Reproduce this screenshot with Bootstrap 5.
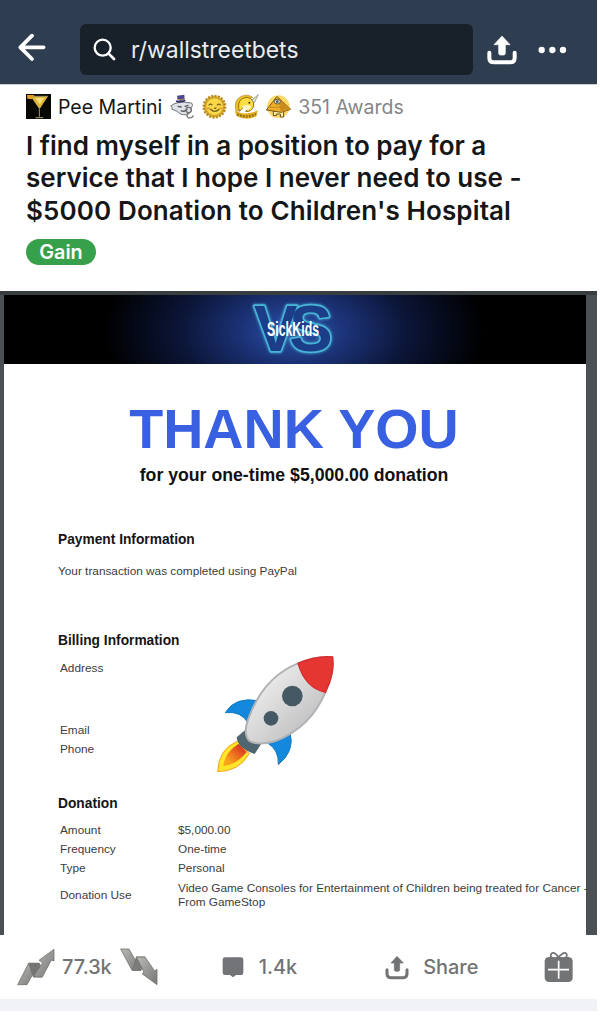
<!DOCTYPE html>
<html lang="en">
<head>
<meta charset="utf-8">
<meta name="viewport" content="width=device-width, initial-scale=1">
<title>r/wallstreetbets</title>
<link href="https://cdn.jsdelivr.net/npm/bootstrap@5.3.0/dist/css/bootstrap.min.css" rel="stylesheet">
<style>
body{background:#fff;font-family:Inter,"Open Sans",sans-serif;color:#151617;overflow:hidden}
svg{display:block;flex:none}
.app{width:597px}
.topbar{height:85px;background:#2e3e50;border-bottom:1px solid #c9ced4;padding:24px 30px 9px 18px}
.searchbox{width:393px;height:51px;background:#18202a;border-radius:6px;margin-left:34px;padding-left:13px;color:#e9ecef;font-size:22.9px}
.post{height:206px;padding:8px 25px 0 26px}
.meta{height:27px;font-size:19.5px}
.meta span{padding-top:2px}
.meta-awards{color:#858687}
.title{font-size:26px;font-weight:600;line-height:32.4px;margin:10px -20px 0 0;white-space:nowrap}
.t3{letter-spacing:.12px}
.flair{background:#37a04a;width:70px;height:26px;font-size:19.8px;font-weight:600;line-height:27px;margin-top:12px}
.doc{height:644px;background:#4b5054;border-top:4px solid #383d40;padding:0 11px 0 4px;font-family:"Liberation Sans",Arial,sans-serif}
.banner{height:69px;background:radial-gradient(ellipse 190px 110px at 290px 36px,#2c53ae 0,#1b3276 28%,#0b1537 60%,#000 100%)}
.sheet{height:571px;padding:0 0 0 54px;color:#3c3c3c;font-size:11.8px;line-height:19px;white-space:nowrap}
.thanks{font-size:55.6px;line-height:60px;color:#3860e0;padding-top:35px;margin-left:-56px}
.sub{font-size:17.7px;line-height:20px;color:#111;margin-left:-56px;margin-top:6px}
.sec{font-size:13.75px;line-height:20px;color:#151515;font-weight:700}
.lbl{width:118px;padding-left:2px;flex:none}
.actions{height:64px;color:#727375;font-size:19.9px;font-weight:500;padding-left:17px;padding-right:24px}
.actions span{padding-top:1px}
.strip{height:12px;background:#f0f2f6}
</style>
</head>
<body>
<div class="app">
<header class="topbar d-flex align-items-center">
  <svg width="28" height="29" viewBox="54 100 84 87" class="mb-1"><path d="M131 143H62M96 108L61 143L96 178" fill="none" stroke="#fff" stroke-width="11" stroke-linecap="round" stroke-linejoin="round"/></svg>
  <div class="searchbox d-flex align-items-center">
    <svg width="23" height="23" viewBox="280 115 69 69"><circle cx="309" cy="144" r="24" fill="none" stroke="#fff" stroke-width="7"/><path d="M327 162L343 178" stroke="#fff" stroke-width="8" stroke-linecap="round"/></svg>
    <span style="margin-left:15px;padding-top:2px">r/wallstreetbets</span>
  </div>
  <svg width="30" height="30" viewBox="559 105 90 90" style="margin-left:14px"><path d="M566 158V173Q566 187 580 187H628Q642 187 642 173V158" fill="none" stroke="#fff" stroke-width="12" stroke-linecap="round"/><path d="M604 108L628 134H614V160Q614 165 609 165H599Q594 165 594 160V134H580Z" fill="#fff" stroke="#fff" stroke-width="2" stroke-linejoin="round"/></svg>
  <svg width="29" height="8" viewBox="714 139 87 24" style="margin-left:21px"><g fill="#fff"><circle cx="725" cy="151" r="9.5"/><circle cx="757" cy="151" r="9.5"/><circle cx="789" cy="151" r="9.5"/></g></svg>
</header>

<section class="post">
  <div class="meta d-flex align-items-center">
    <svg width="25" height="25" viewBox="0 0 75 75"><path fill="#080704" d="M0 0H75V75H0Z"/><path d="M15 8H65L43 42H38Z" fill="#e0b63a"/><path d="M14 7H66M40 42V68M29 71H52" stroke="#c9bc86" stroke-width="2.5" fill="none"/><path d="M3 3H25L18 16L4 14Z" fill="#e29b25"/><path d="M28 12H54L42 31Z" fill="#f7df77"/></svg>
    <span style="margin-left:7px">Pee Martini</span>
    <div class="d-flex" style="gap:7px;margin-left:8px">
      <svg width="25" height="25" viewBox="0 0 75 75"><path d="M2 36Q12 28 22 27Q33 20 46 25L65 27Q71 34 64 41Q66 58 49 62Q30 64 22 52L5 45Q12 42 2 36Z" fill="#dfe3e7" stroke="#71777b" stroke-width="3"/><path d="M21 5L43 2L44 19Q33 24 23 19Z" fill="#4c4898"/><path d="M18 21Q32 28 46 19" stroke="#282758" stroke-width="5" fill="none"/><path d="M23 16Q34 20 44 14" stroke="#bd8e43" stroke-width="3" fill="none"/><path d="M23 37L35 39M44 38L55 34M32 50Q45 55 52 45" stroke="#54595c" stroke-width="4" fill="none"/><circle cx="56" cy="48" r="8" fill="none" stroke="#777" stroke-width="4"/><path d="M57 56Q46 63 54 71Q67 74 70 64" stroke="#777" stroke-width="4" fill="none"/></svg>
      <svg width="25" height="25" viewBox="0 0 75 75"><circle cx="37.5" cy="38" r="32" fill="#dcad2a" stroke="#ba8c24" stroke-width="8" stroke-dasharray="6 4"/><circle cx="37.5" cy="38" r="26" fill="#fbd848" stroke="#c69d30" stroke-width="2"/><path d="M20 34Q26 27 31 34M45 34Q51 27 56 34M25 45Q38 59 52 45M36 42Q40 45 43 40" stroke="#766020" stroke-width="3.5" fill="none"/><path d="M15 43H24M52 43H61" stroke="#e99c39" stroke-width="5"/></svg>
      <svg width="25" height="25" viewBox="0 0 75 75"><path d="M6 50Q-2 20 20 8Q38 -2 56 10Q46 14 24 22Q14 34 18 52Z" fill="#f0bf24" stroke="#a98220" stroke-width="2"/><path d="M14 44Q10 12 39 10Q61 14 59 36Q53 55 35 52Q47 44 39 36Q29 35 18 50Z" fill="#ffdd40" stroke="#916f19" stroke-width="3"/><path d="M53 18L73 2L61 26Z" fill="#dadbd4" stroke="#888269" stroke-width="2"/><path d="M24 37Q39 29 51 37Q51 49 31 49" fill="#fff5c5"/><circle cx="46" cy="26" r="3" fill="#403514"/><path d="M2 50Q38 67 72 49L67 67Q37 81 8 67Z" fill="#e0ae1f"/><path d="M10 61Q38 74 66 60" stroke="#8b6a19" stroke-width="7" stroke-dasharray="5 4" fill="none"/></svg>
      <svg width="25" height="25" viewBox="0 0 75 75"><circle cx="37" cy="38" r="34" fill="#ffd967"/><path d="M22 51V65H31V60H43V69H53V51Z" fill="#fff0a3" stroke="#68501c" stroke-width="3"/><path d="M33 7L1 48L45 55L74 46Z" fill="#edae28" stroke="#74571c" stroke-width="3" stroke-linejoin="round"/><path d="M33 7L45 55L74 46Z" fill="#cb8f20"/><path d="M12 40L56 40" stroke="#b67b1b" stroke-width="2"/><ellipse cx="34" cy="23" rx="9" ry="7" fill="#f3f2df" stroke="#60502e" stroke-width="3"/><circle cx="34" cy="23" r="4" fill="#365766"/></svg>
    </div>
    <span class="meta-awards" style="margin-left:7px">351 Awards</span>
  </div>
  <h1 class="title">I find myself in a position to pay for a<br>service that I hope I never need to use -<br><span class="t3">$5000 Donation to Children's Hospital</span></h1>
  <div class="flair rounded-pill text-white text-center">Gain</div>
</section>

<article class="doc">
  <div class="banner d-flex">
    <svg width="120" height="69" viewBox="232 295 120 69" style="margin-left:228px">
      <defs><filter id="glow" x="-20%" y="-20%" width="140%" height="140%"><feGaussianBlur stdDeviation="1.6" result="b"/><feMerge><feMergeNode in="b"/><feMergeNode in="SourceGraphic"/></feMerge></filter></defs>
      <text x="254" y="351" font-family="Liberation Sans,Arial,sans-serif" font-weight="700" font-size="65" letter-spacing="-8" fill="#1c3c88" stroke="#46b4d8" stroke-width="3.4" stroke-linejoin="round" paint-order="stroke" filter="url(#glow)">VS</text>
      <text x="267" y="335.5" textLength="52" lengthAdjust="spacingAndGlyphs" font-family="Liberation Sans Narrow,Liberation Sans,sans-serif" font-weight="700" font-size="19.5" fill="#fff">SickKids</text>
    </svg>
  </div>
  <div class="sheet bg-white">
    <div class="thanks text-center fw-bold">THANK YOU</div>
    <div class="sub text-center fw-bold">for your one-time $5,000.00 donation</div>
    <div class="sec" style="margin-top:45px">Payment Information</div>
    <div style="margin-top:12px">Your transaction was completed using PayPal</div>
    <div class="sec" style="margin-top:50px">Billing Information</div>
    <div class="d-flex" style="height:143px">
      <div class="lbl" style="padding-top:8px"><div>Address</div><div style="margin-top:43px">Email</div><div>Phone</div></div>
      <svg width="160" height="150" viewBox="0 0 480 450" style="margin:-10px 0 0 24px" role="img" aria-label="Rocket">
        <defs><linearGradient id="hull" x1="0" y1="0" x2="1" y2="1"><stop offset=".2" stop-color="#eee"/><stop offset=".8" stop-color="#bfbfc1"/></linearGradient><linearGradient id="fire" x1="1" y1="0" x2="0" y2="1"><stop offset=".2" stop-color="#dc3b24"/><stop offset=".8" stop-color="#f9a51b"/></linearGradient></defs>
        <path d="M76 215Q105 166 176 179L145 247Q124 209 76 215Z" fill="#1388dc" stroke="#167ac0" stroke-width="3"/>
        <path d="M204 307L271 277Q284 332 235 371Q237 327 204 307Z" fill="#1388dc" stroke="#167ac0" stroke-width="3"/>
        <path d="M112 301Q55 325 53 392Q117 392 148 338Z" fill="#ffe529" stroke="#efa51d" stroke-width="3"/>
        <path d="M116 308Q73 335 70 375Q109 372 140 333Z" fill="url(#fire)"/>
        <path d="M139 264L110 289Q113 322 164 339L184 308Z" fill="#4f6570"/>
        <path d="M147 299Q128 276 146 231Q190 109 294 67Q352 43 397 49Q405 91 376 154Q332 260 224 301Q174 315 147 299Z" fill="url(#hull)" stroke="#b3b3b5" stroke-width="6"/>
        <path d="M294 67Q350 43 398 48Q405 96 376 154Q315 140 294 67Z" fill="#e53632" stroke="#d82c2d" stroke-width="4"/>
        <circle cx="277" cy="165" r="31" fill="#455964"/><circle cx="213" cy="232" r="22" fill="#455964"/>
      </svg>
    </div>
    <div class="sec">Donation</div>
    <div style="margin-top:7px">
      <div class="d-flex"><div class="lbl">Amount</div><div style="margin-left:2px">$5,000.00</div></div>
      <div class="d-flex"><div class="lbl">Frequency</div><div style="margin-left:2px">One-time</div></div>
      <div class="d-flex"><div class="lbl">Type</div><div style="margin-left:2px">Personal</div></div>
      <div class="d-flex align-items-center" style="line-height:14px;margin-top:3px"><div class="lbl">Donation Use</div><div style="margin-left:2px">Video Game Consoles for Entertainment of Children being treated for Cancer -<br>From GameStop</div></div>
    </div>
  </div>
</article>

<footer class="actions d-flex align-items-center">
  <svg width="38" height="38" viewBox="50 84 114 114"><defs><linearGradient id="ar" x1="0" y1="0" x2="1" y2="1"><stop stop-color="#b9b9b7"/><stop offset="1" stop-color="#777876"/></linearGradient></defs><g stroke="#73766c" stroke-width="2.5" stroke-linejoin="round"><path d="M52 194L85 130H115L80 194Z" fill="url(#ar)"/><path d="M85 130H118L125 171H99Z" fill="#757575"/><path d="M99 170L127 128L116 121L161 88V123L153 120L126 171Z" fill="url(#ar)"/></g></svg>
  <span style="margin-left:7px">77.3k</span>
  <svg width="38" height="38" viewBox="364 84 114 114" style="margin-left:8px"><g stroke="#73766c" stroke-width="2.5" stroke-linejoin="round"><path d="M366 87H391L427 151H400Z" fill="url(#ar)"/><path d="M413 111H439L427 151H402Z" fill="#7c7c7c"/><path d="M413 111H439L468 153L475 148V194L430 161L436 157Z" fill="url(#ar)"/></g></svg>
  <svg width="22" height="21" viewBox="669 109 66 63" style="margin-left:64px"><path d="M678 110H726Q733 110 733 117V156Q733 163 726 163H711L702 170L693 163H678Q671 163 671 156V117Q671 110 678 110Z" fill="#737477"/></svg>
  <span style="margin-left:15px">1.4k</span>
  <svg width="24" height="25" viewBox="260 103 72 75" style="margin-left:88px"><path d="M266 147V160Q266 171 277 171H315Q326 171 326 160V147" fill="none" stroke="#727375" stroke-width="9" stroke-linecap="round"/><path d="M296 107L315 127H304V147Q304 152 299 152H293Q288 152 288 147V127H278Z" fill="#727375" stroke="#727375" stroke-width="2" stroke-linejoin="round"/></svg>
  <span style="margin-left:14px">Share</span>
  <svg width="29" height="32" viewBox="732 90 87 96" class="ms-auto"><rect x="734" y="108" width="84" height="75" rx="13" fill="#727375"/><path d="M775 109Q751 115 752 102Q756 91 767 99Q773 103 776 110Q779 103 786 99Q797 91 801 102Q801 115 776 109" fill="#fff" stroke="#727375" stroke-width="5"/><path d="M776 119V173M744 146H807" stroke="#fff" stroke-width="5"/></svg>
</footer>
<div class="strip"></div>
</div>
<script src="https://cdn.jsdelivr.net/npm/bootstrap@5.3.0/dist/js/bootstrap.bundle.min.js"></script>
</body>
</html>
